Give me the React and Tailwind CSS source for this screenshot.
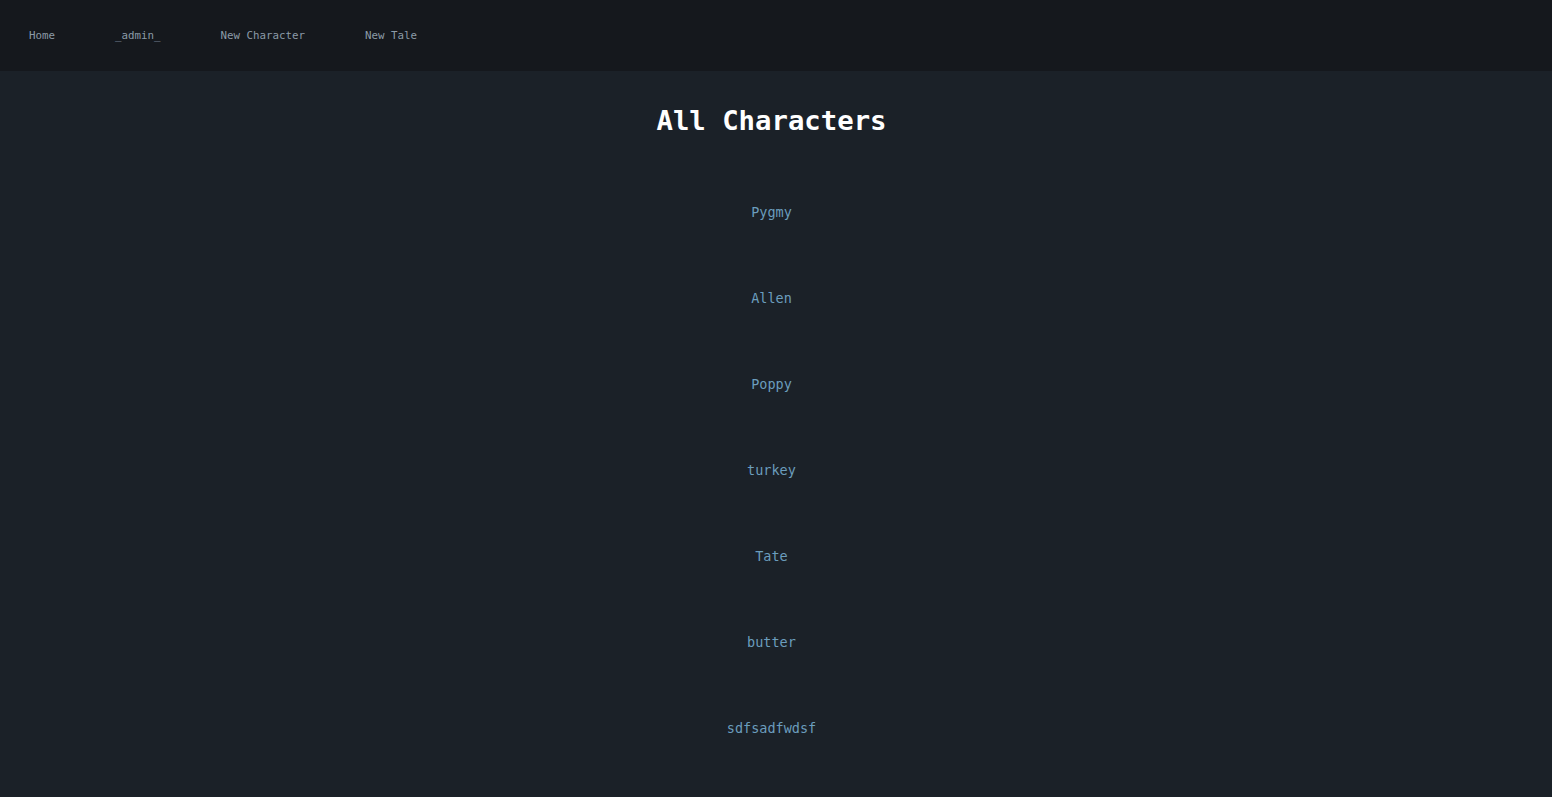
import React from "react";

const chars = ["Pygmy", "Allen", "Poppy", "turkey", "Tate", "butter", "sdfsadfwdsf"];
const nav = ["Home", "_admin_", "New Character", "New Tale"];

export default function App() {
  return (
    <div className="min-h-[797px] bg-[#1b2128]" style={{ fontFamily: '"DejaVu Sans Mono", "Liberation Mono", monospace' }}>
      <nav className="h-[71px] bg-[#15181d] flex items-center gap-[60px] px-[29px] pt-[2px]">
        {nav.map((n) => (
          <a key={n} className="text-[10.8px] text-[#8b9aa7] leading-none">{n}</a>
        ))}
      </nav>
      <main className="flex flex-col items-center pr-[9px]">
        <h1 className="mt-[33px] text-[27.3px] leading-[34px] font-bold text-white">All Characters</h1>
        <ul className="mt-[31px] flex flex-col items-center">
          {chars.map((c) => (
            <li key={c} className="h-[86px] flex items-center text-[13.5px] text-[#6b9dbd]">{c}</li>
          ))}
        </ul>
      </main>
    </div>
  );
}
